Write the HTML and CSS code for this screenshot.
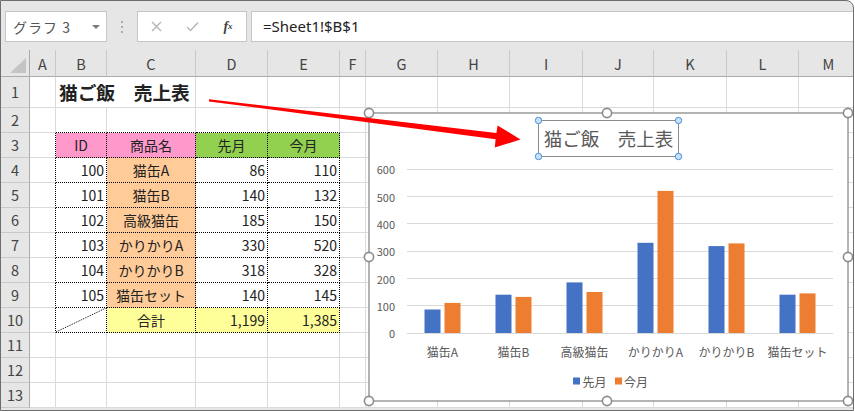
FILE: index.html
```html
<!DOCTYPE html>
<html lang="ja">
<head>
<meta charset="utf-8">
<title>猫ご飯 売上表</title>
<link rel="stylesheet" href="styles.css">
</head>
<body>
<div class="app">
  <div class="toolbar">
    <div class="namebox"><span>グラフ 3</span><span class="caret"></span></div>
    <div class="grip"><i></i><i></i><i></i></div>
    <div class="fbtns">
      <span class="slot"><svg width="11" height="11" viewBox="0 0 11 11"><path class="dim" d="M1 1L10 10M10 1L1 10"/></svg></span>
      <span class="slot"><svg width="13" height="11" viewBox="0 0 13 11"><path class="dim" d="M1 6L4.5 9.5L12 1.5"/></svg></span>
      <span class="slot fx">f<sub>x</sub></span>
    </div>
    <div class="formula">=Sheet1!$B$1</div>
  </div>
  <table class="sheet">
    <colgroup>
      <col class="w29"><col class="w26"><col class="w51"><col class="w89"><col class="w72"><col class="w72"><col class="w26">
      <col class="w72"><col class="w72"><col class="w73"><col class="w71"><col class="w73"><col class="w72"><col class="w60">
    </colgroup>
    <tr class="hdr"><th class="corner"><span class="tri"></span></th><th>A</th><th>B</th><th>C</th><th>D</th><th>E</th><th>F</th><th>G</th><th>H</th><th>I</th><th>J</th><th>K</th><th>L</th><th>M</th></tr>
    <tr class="r1"><th>1</th><td></td><td colspan="2" class="title">猫ご飯　売上表</td><td></td><td></td><td></td><td></td><td></td><td></td><td></td><td></td><td></td><td></td></tr>
    <tr><th>2</th><td></td><td class="dt"></td><td class="dt"></td><td class="dt"></td><td class="dt"></td><td></td><td></td><td></td><td></td><td></td><td></td><td></td><td></td></tr>
    <tr><th>3</th><td class="dl"></td><td class="d pink c">ID</td><td class="d pink c">商品名</td><td class="d green c">先月</td><td class="d green c">今月</td><td></td><td></td><td></td><td></td><td></td><td></td><td></td><td></td></tr>
    <tr><th>4</th><td class="dl"></td><td class="d r">100</td><td class="d orange c">猫缶A</td><td class="d r">86</td><td class="d r">110</td><td></td><td></td><td></td><td></td><td></td><td></td><td></td><td></td></tr>
    <tr><th>5</th><td class="dl"></td><td class="d r">101</td><td class="d orange c">猫缶B</td><td class="d r">140</td><td class="d r">132</td><td></td><td></td><td></td><td></td><td></td><td></td><td></td><td></td></tr>
    <tr><th>6</th><td class="dl"></td><td class="d r">102</td><td class="d orange c">高級猫缶</td><td class="d r">185</td><td class="d r">150</td><td></td><td></td><td></td><td></td><td></td><td></td><td></td><td></td></tr>
    <tr><th>7</th><td class="dl"></td><td class="d r">103</td><td class="d orange c">かりかりA</td><td class="d r">330</td><td class="d r">520</td><td></td><td></td><td></td><td></td><td></td><td></td><td></td><td></td></tr>
    <tr><th>8</th><td class="dl"></td><td class="d r">104</td><td class="d orange c">かりかりB</td><td class="d r">318</td><td class="d r">328</td><td></td><td></td><td></td><td></td><td></td><td></td><td></td><td></td></tr>
    <tr><th>9</th><td class="dl"></td><td class="d r">105</td><td class="d orange c">猫缶セット</td><td class="d r">140</td><td class="d r">145</td><td></td><td></td><td></td><td></td><td></td><td></td><td></td><td></td></tr>
    <tr><th>10</th><td class="dl"></td><td class="d diag"><svg width="50" height="24" viewBox="0 0 50 24"><line x1="0" y1="24" x2="50" y2="0"/></svg></td><td class="d yellow c">合計</td><td class="d yellow r">1,199</td><td class="d yellow r">1,385</td><td></td><td></td><td></td><td></td><td></td><td></td><td></td><td></td></tr>
    <tr><th>11</th><td></td><td></td><td></td><td></td><td></td><td></td><td></td><td></td><td></td><td></td><td></td><td></td><td></td></tr>
    <tr><th>12</th><td></td><td></td><td></td><td></td><td></td><td></td><td></td><td></td><td></td><td></td><td></td><td></td><td></td></tr>
    <tr><th>13</th><td></td><td></td><td></td><td></td><td></td><td></td><td></td><td></td><td></td><td></td><td></td><td></td><td></td></tr>
  </table>

  <svg class="chart" width="490" height="300" viewBox="-5 -5 490 300">
    <rect class="frame" x="0" y="0" width="479" height="288"/>
    <g class="grid">
      <line x1="38" y1="56.5" x2="464" y2="56.5"/>
      <line x1="38" y1="83.5" x2="464" y2="83.5"/>
      <line x1="38" y1="110.5" x2="464" y2="110.5"/>
      <line x1="38" y1="138.5" x2="464" y2="138.5"/>
      <line x1="38" y1="165.5" x2="464" y2="165.5"/>
      <line x1="38" y1="192.5" x2="464" y2="192.5"/>
      <line x1="38" y1="220.5" x2="464" y2="220.5"/>
    </g>
    <g class="ylab">
      <text x="26" y="56">600</text>
      <text x="26" y="83.5">500</text>
      <text x="26" y="110.5">400</text>
      <text x="26" y="138">300</text>
      <text x="26" y="165.5">200</text>
      <text x="26" y="192.5">100</text>
      <text x="26" y="220">0</text>
    </g>
    <g class="s1">
      <rect x="55.5" y="196.5" width="16" height="23.5"/>
      <rect x="126.5" y="181.7" width="16" height="38.3"/>
      <rect x="197.5" y="169.4" width="16" height="50.6"/>
      <rect x="268.5" y="129.8" width="16" height="90.2"/>
      <rect x="339.5" y="133.1" width="16" height="86.9"/>
      <rect x="410.5" y="181.7" width="16" height="38.3"/>
    </g>
    <g class="s2">
      <rect x="75.5" y="189.9" width="16" height="30.1"/>
      <rect x="146.5" y="183.9" width="16" height="36.1"/>
      <rect x="217.5" y="179" width="16" height="41"/>
      <rect x="288.5" y="77.9" width="16" height="142.1"/>
      <rect x="359.5" y="130.4" width="16" height="89.6"/>
      <rect x="430.5" y="180.4" width="16" height="39.6"/>
    </g>
    <g class="xlab">
      <text x="73.5" y="238">猫缶A</text>
      <text x="144.5" y="238">猫缶B</text>
      <text x="215.5" y="238">高級猫缶</text>
      <text x="286.5" y="238">かりかりA</text>
      <text x="357.5" y="238">かりかりB</text>
      <text x="428.5" y="238">猫缶セット</text>
    </g>
    <g class="legend">
      <rect class="s1f" x="204" y="264.5" width="7" height="7"/>
      <text x="213.5" y="268">先月</text>
      <rect class="s2f" x="246" y="264.5" width="7" height="7"/>
      <text x="255" y="268">今月</text>
    </g>
    <rect class="tbox" x="169.5" y="7.5" width="140" height="36"/>
    <text class="ttl" x="239.5" y="25">猫ご飯　売上表</text>
    <g class="th">
      <circle cx="169.5" cy="7.5" r="3.2"/>
      <circle cx="309.5" cy="7.5" r="3.2"/>
      <circle cx="169.5" cy="43.5" r="3.2"/>
      <circle cx="309.5" cy="43.5" r="3.2"/>
    </g>
    <g class="bh">
      <circle cx="0" cy="0" r="4.6"/>
      <circle cx="238" cy="0" r="4.6"/>
      <circle cx="479" cy="0" r="4.6"/>
      <circle cx="0" cy="144" r="4.6"/>
      <circle cx="479" cy="144" r="4.6"/>
      <circle cx="0" cy="288" r="4.6"/>
      <circle cx="238" cy="288" r="4.6"/>
      <circle cx="479" cy="288" r="4.6"/>
    </g>
  </svg>

  <svg class="arrow" width="854" height="411" viewBox="1 1 854 411">
    <polygon points="209,99.3 496.4,133 497.6,125.5 520.5,139.5 494.8,147.5 495.6,139.3 209,101.4"/>
  </svg>
</div>
</body>
</html>
```

FILE: styles.css
```css
* { box-sizing: border-box; }
html, body { margin: 0; padding: 0; background: #fff; }
body { font-family: "Noto Sans CJK JP", sans-serif; color: #1a1a1a; }

.app {
  position: relative;
  width: 854px;
  height: 411px;
  border: 1px solid #6e6e6e;
  border-top-right-radius: 8px;
  overflow: hidden;
  background: #e6e6e6;
}

/* formula bar */
.toolbar { display: flex; align-items: flex-start; height: 49px; padding: 10px 0 0 4px; }
.namebox {
  width: 102px; height: 31px; background: #fff; border: 1px solid #c6c6c6;
  display: flex; align-items: center; justify-content: space-between;
  padding: 0 6px 0 7px; font-size: 14px; color: #555; line-height: 1;
}
.namebox span:first-child { letter-spacing: 1px; }
.caret { width: 0; height: 0; border-left: 4px solid transparent; border-right: 4px solid transparent; border-top: 4px solid #7a7a7a; }
.grip { width: 30px; height: 31px; display: flex; flex-direction: column; align-items: center; justify-content: center; gap: 3px; }
.grip i { display: block; width: 2px; height: 2px; background: #ababab; }
.fbtns {
  width: 110px; height: 31px; background: #fff; border: 1px solid #c6c6c6;
  display: flex; align-items: center;
}
.slot { width: 36px; display: flex; justify-content: center; align-items: center; }
.dim { fill: none; stroke: #b4b4b4; stroke-width: 1.4; }
.fx { font-family: "Liberation Serif", serif; font-style: italic; font-weight: bold; font-size: 14px; color: #444; line-height: 1; }
.fx sub { font-size: 9px; vertical-align: -2px; }
.formula {
  flex: 1; height: 31px; margin-left: 4px; background: #fff;
  border: 1px solid #c6c6c6; border-right: none;
  padding-left: 11px; font-family: "Noto Sans", sans-serif; font-size: 15px;
  line-height: 29px; color: #222;
}

/* grid */
.sheet {
  border-collapse: separate; border-spacing: 0; table-layout: fixed;
  width: 858px; background: #fff; font-size: 14px; line-height: 1.2;
}
.w29 { width: 29px; } .w26 { width: 26px; } .w51 { width: 51px; } .w89 { width: 89px; }
.w72 { width: 72px; } .w73 { width: 73px; } .w71 { width: 71px; } .w60 { width: 60px; }
.sheet tr { height: 25px; }
.sheet tr.hdr { height: 27px; }
.sheet tr.r1 { height: 31px; }
.sheet td {
  border-right: 1px solid #dadada; border-bottom: 1px solid #dadada;
  padding: 0 3px; white-space: nowrap; overflow: visible; color: #222;
}
.sheet th {
  background: #e6e6e6; font-weight: normal; color: #444; font-size: 14.5px;
  border-right: 1px solid #c9c9c9; border-bottom: 1px solid #c9c9c9; padding: 0;
}
.hdr th { border-bottom-color: #ababab; padding-top: 1px; }
.sheet tr th:first-child { border-right-color: #ababab; }
.corner { position: relative; }
.tri {
  position: absolute; right: 3px; bottom: 3px; width: 0; height: 0;
  border-left: 16px solid transparent; border-bottom: 15px solid #c4c4c4;
}
.title { font-size: 18.7px; font-weight: 700; color: #111; padding-left: 4px; }

.d { border-right: 1px dotted #000 !important; border-bottom: 1px dotted #000 !important; }
.dl { border-right: 1px dotted #000 !important; }
.dt { border-bottom: 1px dotted #000 !important; }
.c { text-align: center; }
.r { text-align: right; padding-right: 2px !important; }
.pink { background: #ff99cc; }
.green { background: #92d050; }
.orange { background: #ffcc99; }
.yellow { background: #ffff99; }
.diag { padding: 0 !important; line-height: 0; }
.diag svg { display: block; }
.diag line { stroke: #000; stroke-width: 1; stroke-dasharray: 1 1; }

/* chart */
.chart { position: absolute; left: 363px; top: 107px; overflow: visible; }
.chart text { font-family: "Noto Sans CJK JP", sans-serif; fill: #595959; dominant-baseline: central; }
.frame { fill: #fff; stroke: #8c8c8c; stroke-width: 1.3; }
.grid line { stroke: #d9d9d9; stroke-width: 1; }
.ylab text { font-size: 11px; text-anchor: end; }
.xlab text { font-size: 12px; text-anchor: middle; }
.legend text { font-size: 12px; }
.s1 rect, .s1f { fill: #4472c4; }
.s2 rect, .s2f { fill: #ed7d31; }
.tbox { fill: none; stroke: #8c8c8c; stroke-width: 1; }
.chart .ttl { font-size: 18.5px; text-anchor: middle; fill: #595959; }
.th circle { fill: #c9e2f8; stroke: #4a8fd8; stroke-width: 1; }
.bh circle { fill: #fff; stroke: #8a8a8a; stroke-width: 1.6; }

/* annotation arrow */
.arrow { position: absolute; left: 0; top: 0; pointer-events: none; }
.arrow polygon { fill: #ff0000; }
```
